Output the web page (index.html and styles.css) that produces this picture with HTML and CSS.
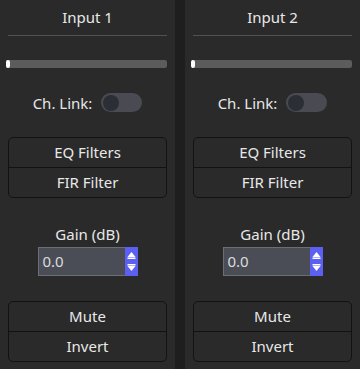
FILE: index.html
```html
<!DOCTYPE html>
<html>
<head>
<meta charset="utf-8">
<link rel="stylesheet" href="styles.css">
</head>
<body>
<div class="row">
  <section class="panel">
    <div class="title">Input 1</div>
    <div class="sep"></div>
    <div class="track"><div class="thumb"></div></div>
    <div class="link"><span>Ch. Link:</span><span class="toggle"><span class="knob"></span></span></div>
    <div class="group"><div class="btn">EQ Filters</div><div class="btn">FIR Filter</div></div>
    <div class="label">Gain (dB)</div>
    <div class="spin">
      <div class="val">0.0</div>
      <div class="arrows">
        <svg width="13" height="29" viewBox="0 0 13 29"><path d="M2.5 10 L6.5 5 L10.5 10 Z" fill="#fff"/><rect x="2.5" y="10.5" width="8" height="1.5" fill="#fff"/><rect x="2.5" y="17" width="8" height="1.5" fill="#fff"/><path d="M2.5 19 L6.5 24 L10.5 19 Z" fill="#fff"/></svg>
      </div>
    </div>
    <div class="group"><div class="btn">Mute</div><div class="btn">Invert</div></div>
  </section>
  <section class="panel">
    <div class="title">Input 2</div>
    <div class="sep"></div>
    <div class="track"><div class="thumb"></div></div>
    <div class="link"><span>Ch. Link:</span><span class="toggle"><span class="knob"></span></span></div>
    <div class="group"><div class="btn">EQ Filters</div><div class="btn">FIR Filter</div></div>
    <div class="label">Gain (dB)</div>
    <div class="spin">
      <div class="val">0.0</div>
      <div class="arrows">
        <svg width="13" height="29" viewBox="0 0 13 29"><path d="M2.5 10 L6.5 5 L10.5 10 Z" fill="#fff"/><rect x="2.5" y="10.5" width="8" height="1.5" fill="#fff"/><rect x="2.5" y="17" width="8" height="1.5" fill="#fff"/><path d="M2.5 19 L6.5 24 L10.5 19 Z" fill="#fff"/></svg>
      </div>
    </div>
    <div class="group"><div class="btn">Mute</div><div class="btn">Invert</div></div>
  </section>
</div>
</body>
</html>
```
FILE: styles.css
```css
html, body {
  margin: 0;
  padding: 0;
  background: #1e1e1e;
}
body {
  font-family: "Noto Sans", "Open Sans", sans-serif;
  font-size: 15px;
  color: #e8e8e8;
}
.row {
  display: flex;
  gap: 10px;
  width: 360px;
  height: 369px;
}
.panel {
  width: 175px;
  height: 369px;
  box-sizing: border-box;
  background: #2a2a2a;
  padding: 0 8px;
  display: flex;
  flex-direction: column;
}
.title {
  height: 35px;
  line-height: 35px;
  text-align: center;
}
.sep {
  height: 1px;
  background: #525252;
}
.track {
  margin: 24px 0 0 -2px;
  height: 8px;
  background: #5c5c5c;
  border-radius: 2px;
  position: relative;
}
.thumb {
  position: absolute;
  left: 0;
  top: 0;
  width: 4px;
  height: 8px;
  border-radius: 2px;
  background: #ffffff;
}
.link {
  margin-top: 25px;
  height: 19px;
  display: flex;
  align-items: center;
  justify-content: center;
  gap: 9px;
}
.toggle {
  width: 41px;
  height: 19px;
  border-radius: 10px;
  background: #4a4b52;
  display: flex;
  align-items: center;
  padding-left: 2px;
  box-sizing: border-box;
}
.knob {
  width: 16px;
  height: 16px;
  border-radius: 50%;
  background: #2b2e34;
}
.group {
  margin-top: 25px;
  border: 1px solid #121212;
  border-radius: 5px;
  display: flex;
  flex-direction: column;
}
.btn {
  height: 29px;
  line-height: 29px;
  text-align: center;
}
.btn + .btn {
  border-top: 1px solid #121212;
}
.label {
  margin-top: 26px;
  height: 20px;
  line-height: 20px;
  text-align: center;
}
.spin {
  margin: 3px auto 0;
  width: 100px;
  height: 29px;
  display: flex;
}
.val {
  flex: 1;
  background: #4b4d56;
  border: 1px solid #6c6e75;
  border-right: none;
  line-height: 27px;
  padding-left: 4px;
  color: #dcdcdc;
}
.arrows {
  width: 13px;
  background: #5b5ff2;
  display: flex;
  align-items: center;
}
.arrows svg {
  display: block;
}
```
